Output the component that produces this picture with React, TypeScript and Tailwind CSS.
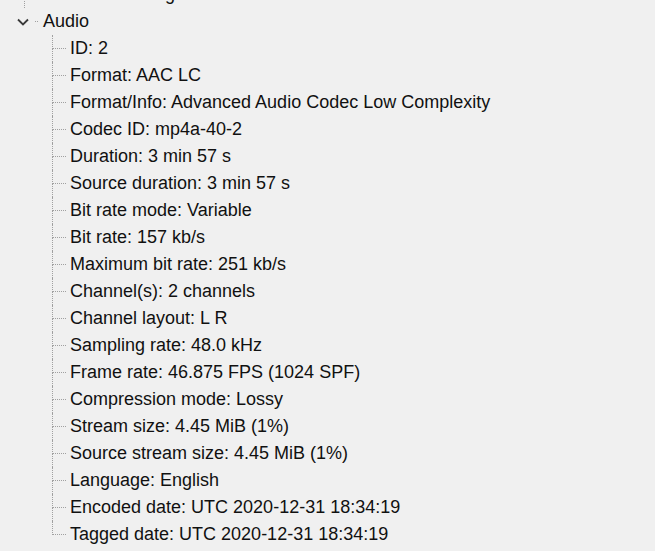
const AUDIO_FIELDS = [
  'ID: 2',
  'Format: AAC LC',
  'Format/Info: Advanced Audio Codec Low Complexity',
  'Codec ID: mp4a-40-2',
  'Duration: 3 min 57 s',
  'Source duration: 3 min 57 s',
  'Bit rate mode: Variable',
  'Bit rate: 157 kb/s',
  'Maximum bit rate: 251 kb/s',
  'Channel(s): 2 channels',
  'Channel layout: L R',
  'Sampling rate: 48.0 kHz',
  'Frame rate: 46.875 FPS (1024 SPF)',
  'Compression mode: Lossy',
  'Stream size: 4.45 MiB (1%)',
  'Source stream size: 4.45 MiB (1%)',
  'Language: English',
  'Encoded date: UTC 2020-12-31 18:34:19',
  'Tagged date: UTC 2020-12-31 18:34:19',
];

const dot = 'border-dotted border-[#a0a0a0]';

export default function App() {
  return (
    <div
      className="h-[551px] w-[655px] overflow-hidden bg-[#f0f0f0] text-[18px] text-[#111]"
      style={{ fontFamily: '"Liberation Sans", Arial, sans-serif' }}
    >
      <div className="-mt-[19px]">
        {/* last child of the stream above, mostly scrolled out */}
        <div className="flex h-[27px] items-stretch">
          <div className="w-[24px] shrink-0" />
          <div className={`w-[28px] shrink-0 border-l ${dot}`} />
          <Connector last />
          <span className="ml-[4px] self-center whitespace-nowrap">Codec configuration box: avcC</span>
        </div>

        <div className="flex h-[27px] items-center">
          <div className="w-[17px] shrink-0" />
          <svg width="12" height="8" viewBox="0 0 12 8" className="shrink-0">
            <path d="M1 1.5 L6 6.5 L11 1.5" fill="none" stroke="#3a3a3a" strokeWidth="1.8" />
          </svg>
          <div className="w-[6px] shrink-0" />
          <div className={`h-0 w-[3px] shrink-0 border-t ${dot}`} />
          <span className="ml-[5px] whitespace-nowrap">Audio</span>
        </div>

        {AUDIO_FIELDS.map((field, i) => (
          <div key={field} className="flex h-[27px] items-stretch">
            <div className="w-[52px] shrink-0" />
            <Connector last={i === AUDIO_FIELDS.length - 1} />
            <span className="ml-[4px] self-center whitespace-nowrap">{field}</span>
          </div>
        ))}
      </div>
    </div>
  );
}

function Connector({ last }: { last?: boolean }) {
  return (
    <div className="flex w-[14px] shrink-0 flex-col">
      <div className={`h-[14px] border-b border-l ${dot}`} />
      <div className={`flex-1 ${last ? '' : `border-l ${dot}`}`} />
    </div>
  );
}
